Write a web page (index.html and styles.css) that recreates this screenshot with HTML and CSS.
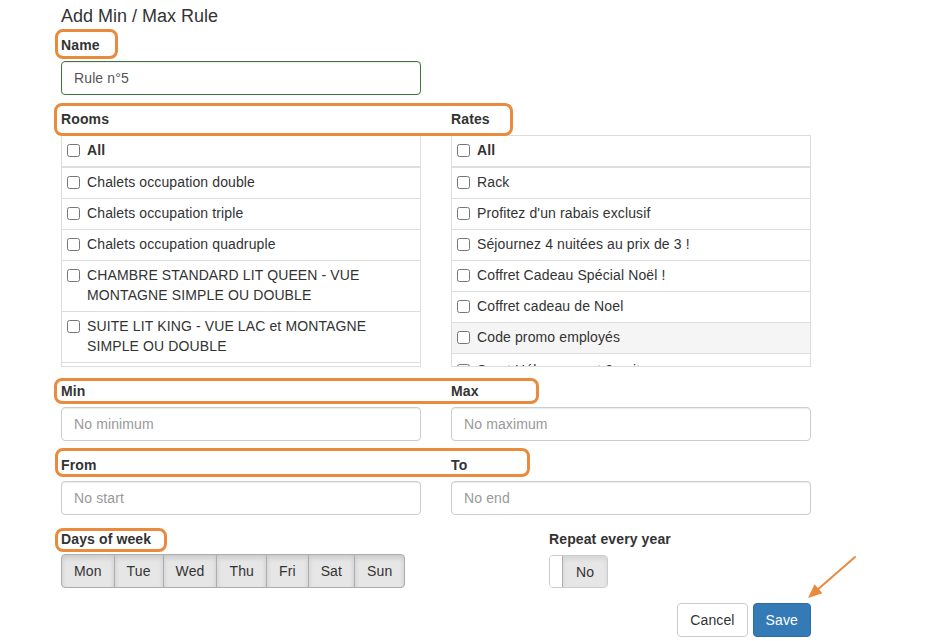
FILE: index.html
```html
<!DOCTYPE html>
<html lang="en">
<head>
<meta charset="utf-8">
<title>Add Min / Max Rule</title>
<link rel="stylesheet" href="styles.css">
</head>
<body>
<div class="screen">
  <div class="page">
    <h4 class="title">Add Min / Max Rule</h4>

    <div class="group">
      <label class="lbl">Name</label>
      <input class="field field-ok" type="text" value="Rule n°5">
    </div>

    <div class="grid2 group">
      <div>
        <label class="lbl">Rooms</label>
        <div class="list">
          <div class="list-all"><input type="checkbox" class="cb"><b>All</b></div>
          <div class="item"><input type="checkbox" class="cb"><span>Chalets occupation double</span></div>
          <div class="item"><input type="checkbox" class="cb"><span>Chalets occupation triple</span></div>
          <div class="item"><input type="checkbox" class="cb"><span>Chalets occupation quadruple</span></div>
          <div class="item"><input type="checkbox" class="cb"><span>CHAMBRE STANDARD LIT QUEEN - VUE MONTAGNE SIMPLE OU DOUBLE</span></div>
          <div class="item"><input type="checkbox" class="cb"><span>SUITE LIT KING - VUE LAC et MONTAGNE SIMPLE OU DOUBLE</span></div>
          <div class="item item-empty"></div>
        </div>
      </div>
      <div>
        <label class="lbl">Rates</label>
        <div class="list">
          <div class="list-all"><input type="checkbox" class="cb"><b>All</b></div>
          <div class="item"><input type="checkbox" class="cb"><span>Rack</span></div>
          <div class="item"><input type="checkbox" class="cb"><span>Profitez d'un rabais exclusif</span></div>
          <div class="item"><input type="checkbox" class="cb"><span>Séjournez 4 nuitées au prix de 3 !</span></div>
          <div class="item"><input type="checkbox" class="cb"><span>Coffret Cadeau Spécial Noël !</span></div>
          <div class="item"><input type="checkbox" class="cb"><span>Coffret cadeau de Noel</span></div>
          <div class="item item-hover"><input type="checkbox" class="cb"><span>Code promo employés</span></div>
          <div class="item item-clip"><input type="checkbox" class="cb"><span>Sport Hébergement 2 nuits</span></div>
        </div>
      </div>
    </div>

    <div class="grid2 group">
      <div>
        <label class="lbl">Min</label>
        <input class="field" type="text" placeholder="No minimum">
      </div>
      <div>
        <label class="lbl">Max</label>
        <input class="field" type="text" placeholder="No maximum">
      </div>
    </div>

    <div class="grid2 group">
      <div>
        <label class="lbl">From</label>
        <input class="field" type="text" placeholder="No start">
      </div>
      <div>
        <label class="lbl">To</label>
        <input class="field" type="text" placeholder="No end">
      </div>
    </div>

    <div class="bottom">
      <div>
        <label class="lbl lbl-tight">Days of week</label>
        <div class="btn-group">
          <button class="btn btn-day">Mon</button><button class="btn btn-day">Tue</button><button class="btn btn-day">Wed</button><button class="btn btn-day">Thu</button><button class="btn btn-day">Fri</button><button class="btn btn-day">Sat</button><button class="btn btn-day">Sun</button>
        </div>
      </div>
      <div>
        <label class="lbl">Repeat every year</label>
        <div class="toggle"><span class="toggle-off"></span><span class="toggle-label">No</span></div>
      </div>
    </div>

    <div class="actions">
      <button class="btn btn-cancel">Cancel</button>
      <button class="btn btn-save">Save</button>
    </div>
  </div>

  <div class="mark mark-name"></div>
  <div class="mark mark-rooms"></div>
  <div class="mark mark-min"></div>
  <div class="mark mark-from"></div>
  <div class="mark mark-days"></div>
  <svg class="arrow" width="70" height="60" viewBox="800 550 70 60">
    <line x1="855" y1="557" x2="816" y2="591" stroke="#e98a3c" stroke-width="2" stroke-linecap="round"/>
    <polygon points="808,598 814.6,584.3 822.4,593.3" fill="#e98a3c"/>
  </svg>
</div>
</body>
</html>
```
FILE: styles.css
```css
html, body {
  margin: 0;
  padding: 0;
  background: #fff;
}
body {
  font-family: "Liberation Sans", Arial, Helvetica, sans-serif;
  font-size: 14px;
  line-height: 20px;
  color: #333;
  letter-spacing: 0.12px;
}
.screen {
  position: relative;
  width: 938px;
  height: 641px;
  overflow: hidden;
}
.page {
  width: 750px;
  margin-left: 61px;
  padding-top: 6px;
}
.title {
  margin: 0 0 9px;
  font-size: 18px;
  line-height: 20px;
  font-weight: normal;
  letter-spacing: 0;
  color: #333;
}
.group {
  margin-bottom: 14px;
}
.lbl {
  display: block;
  font-weight: bold;
  line-height: 20px;
  margin-bottom: 6px;
}
.lbl-tight {
  margin-bottom: 5px;
}
.field {
  display: block;
  box-sizing: border-box;
  width: 360px;
  height: 34px;
  margin: 0;
  padding: 6px 12px;
  font-family: inherit;
  font-size: 14px;
  line-height: 20px;
  letter-spacing: 0.12px;
  color: #555;
  background: #fff;
  border: 1px solid #ccc;
  border-radius: 4px;
  box-shadow: inset 0 1px 1px rgba(0,0,0,0.075);
  outline: none;
}
.field::placeholder {
  color: #999;
}
.field-ok {
  border-color: #3c763d;
}
.grid2 {
  display: grid;
  grid-template-columns: 360px 360px;
  column-gap: 30px;
}
.list {
  box-sizing: border-box;
  height: 232px;
  border: 1px solid #ddd;
  overflow: hidden;
}
.list-all, .item {
  display: flex;
  align-items: flex-start;
  padding: 4px 10px 6px 5px;
  line-height: 20px;
}
.list-all {
  border-bottom: 1px solid #ddd;
}
.item {
  border-top: 1px solid #ddd;
}
.item-empty {
  height: 20px;
}
.item-hover {
  background: #f5f5f5;
}
.item-clip {
  padding-top: 6px;
}
.cb {
  flex: none;
  width: 13px;
  height: 13px;
  margin: 4px 7px 0 0;
}
.bottom {
  display: grid;
  grid-template-columns: 488px 1fr;
}
.btn-group {
  display: flex;
}
.btn {
  box-sizing: border-box;
  height: 34px;
  margin: 0;
  padding: 6px 12px;
  font-family: inherit;
  font-size: 14px;
  line-height: 20px;
  letter-spacing: 0.12px;
  border: 1px solid #ccc;
  border-radius: 4px;
  background: #fff;
  color: #333;
}
.btn-day {
  background: #e6e6e6;
  border-color: #adadad;
  border-radius: 0;
  margin-left: -1px;
  box-shadow: inset 0 3px 5px rgba(0,0,0,0.125);
}
.btn-day:first-child {
  margin-left: 0;
  border-radius: 4px 0 0 4px;
}
.btn-day:last-child {
  border-radius: 0 4px 4px 0;
}
.toggle {
  display: inline-flex;
  box-sizing: border-box;
  height: 33px;
  border: 1px solid #ccc;
  border-radius: 4px;
  overflow: hidden;
  vertical-align: top;
}
.toggle-off {
  width: 12px;
  background: #fff;
}
.toggle-label {
  padding: 6px 13px 5px;
  background: #e6e6e6;
  border-left: 1px solid #adadad;
  box-shadow: inset 0 3px 5px rgba(0,0,0,0.08);
  line-height: 20px;
}
.actions {
  display: flex;
  justify-content: flex-end;
  gap: 5px;
  margin-top: 15px;
}
.btn-save {
  background: #337ab7;
  border-color: #2e6da4;
  color: #fff;
}
.mark {
  position: absolute;
  box-sizing: border-box;
  border: 3px solid #e98a3c;
  border-radius: 8px;
}
.mark-name { left: 55px; top: 29px; width: 63px; height: 30px; }
.mark-rooms { left: 54px; top: 103px; width: 459px; height: 33px; }
.mark-min { left: 54px; top: 378px; width: 485px; height: 26px; }
.mark-from { left: 55px; top: 448px; width: 475px; height: 29px; }
.mark-days { left: 55px; top: 528px; width: 112px; height: 24px; }
.arrow {
  position: absolute;
  left: 800px;
  top: 550px;
}
```
